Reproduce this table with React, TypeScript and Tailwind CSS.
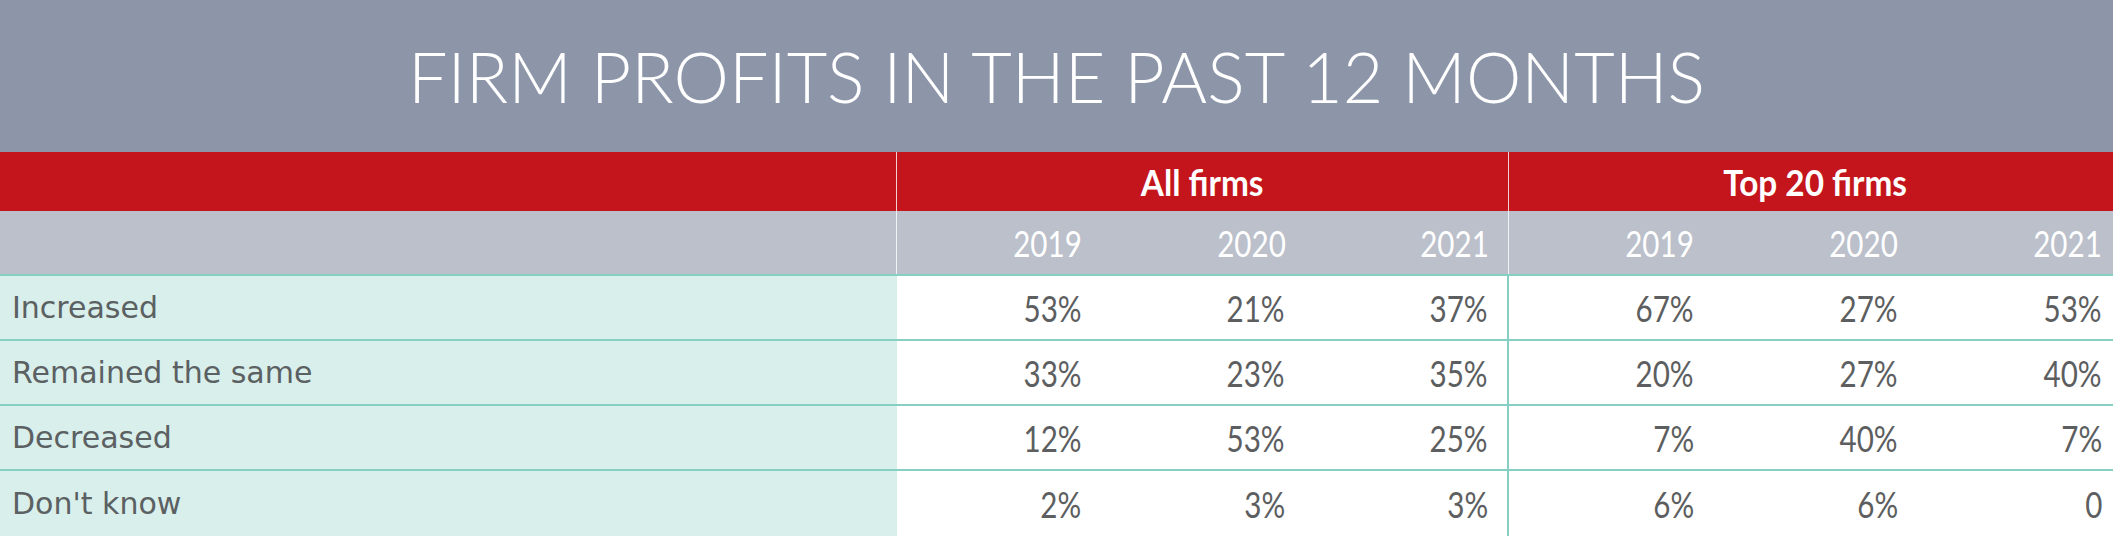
import React from 'react';

const years = ['2019', '2020', '2021'];

const rows: { label: string; all: string[]; top: string[] }[] = [
  { label: 'Increased', all: ['53%', '21%', '37%'], top: ['67%', '27%', '53%'] },
  { label: 'Remained the same', all: ['33%', '23%', '35%'], top: ['20%', '27%', '40%'] },
  { label: 'Decreased', all: ['12%', '53%', '25%'], top: ['7%', '40%', '7%'] },
  { label: "Don't know", all: ['2%', '3%', '3%'], top: ['6%', '6%', '0'] },
];

// one group of three year columns
const Cells = ({ values, className }: { values: string[]; className: string }) => (
  <div className={`flex w-[612px] ${className}`}>
    {values.map((v, i) => (
      <div key={i} className="flex-1 flex items-center justify-end pr-[19px]">
        <span className="inline-block scale-x-[0.8] origin-right font-['Lato',sans-serif] text-[37px] leading-none">
          {v}
        </span>
      </div>
    ))}
  </div>
);

const App: React.FC = () => {
  return (
    <div className="w-[2113px] h-[538px] overflow-hidden bg-white">
      {/* title band */}
      <div className="h-[152px] bg-[#8d96a9] flex items-center justify-center">
        <h1 className="text-white text-[70px] font-light font-['Lato',sans-serif] leading-none">
          FIRM PROFITS IN THE PAST 12 MONTHS
        </h1>
      </div>

      <div className="w-[2121px]">
        {/* group headers */}
        <div className="flex h-[59px] bg-[#c4151c] text-white">
          <div className="w-[897px] border-r border-white/80" />
          <div className="w-[612px] border-r border-white/80 flex items-center justify-center">
            <span className="inline-block scale-x-[0.9] font-['Lato',sans-serif] font-bold text-[37px] leading-none">All firms</span>
          </div>
          <div className="w-[612px] flex items-center justify-center">
            <span className="inline-block scale-x-[0.9] font-['Lato',sans-serif] font-bold text-[37px] leading-none">Top 20 firms</span>
          </div>
        </div>

        {/* years */}
        <div className="flex h-[65px] bg-[#bbc0cb] text-white border-b-2 border-[#86cfc3]">
          <div className="w-[897px] border-r border-white/80" />
          <Cells values={years} className="border-r border-white/80" />
          <Cells values={years} className="" />
        </div>

        {/* data rows */}
        {rows.map((r, idx) => (
          <div
            key={r.label}
            className={`flex h-[65px] text-[#5c5e60] ${idx < rows.length - 1 ? 'border-b-2 border-[#86cfc3]' : ''}`}
          >
            <div className="w-[897px] bg-[#d9efeb] flex items-center pl-[12px] text-[30px] text-[#5b6062] font-['DejaVu_Sans',sans-serif]">
              {r.label}
            </div>
            <Cells values={r.all} className="border-r-2 border-[#86cfc3]" />
            <Cells values={r.top} className="" />
          </div>
        ))}
      </div>
    </div>
  );
};

export default App;
